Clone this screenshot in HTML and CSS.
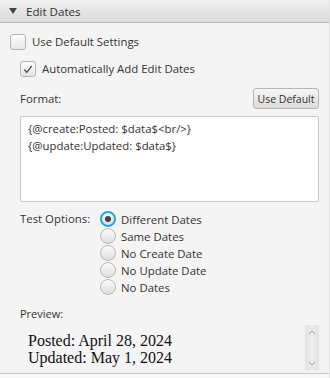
FILE: index.html
```html
<!DOCTYPE html>
<html lang="en">
<head>
  <meta charset="UTF-8" />
  <title>Edit Dates</title>
  <link rel="stylesheet" href="styles.css">
</head>
<body>
  <div class="pane">
    <div class="header">
      <span class="arrow"></span>
      <span>Edit Dates</span>
    </div>

    <div class="content">
      <label class="check">
        <span class="box"></span>
        <span>Use Default Settings</span>
      </label>

      <label class="check indent">
        <span class="box">
          <svg width="15" height="15" viewBox="0 0 15 15"><path d="M3.5 7.5 L6.2 10.6 L11.5 3.6" fill="none" stroke="#555" stroke-width="1.6"/></svg>
        </span>
        <span>Automatically Add Edit Dates</span>
      </label>

      <div class="format-row">
        <span>Format:</span>
        <button class="btn">Use Default</button>
      </div>

      <div class="editor">
        <div>{@create:Posted: $data$&lt;br/&gt;}</div>
        <div>{@update:Updated: $data$}</div>
      </div>

      <div class="options">
        <span class="opt-label">Test Options:</span>
        <div class="radios">
          <label class="radio"><span class="dot on"></span>Different Dates</label>
          <label class="radio"><span class="dot"></span>Same Dates</label>
          <label class="radio"><span class="dot"></span>No Create Date</label>
          <label class="radio"><span class="dot"></span>No Update Date</label>
          <label class="radio"><span class="dot"></span>No Dates</label>
        </div>
      </div>

      <div class="preview-label">Preview:</div>
      <div class="preview">
        <div class="preview-text">
          <div>Posted: April 28, 2024</div>
          <div>Updated: May 1, 2024</div>
        </div>
        <div class="scrollbar">
          <svg width="14" height="8" viewBox="0 0 14 8"><path d="M4 6 L7 3 L10 6" fill="none" stroke="#9a9a9a" stroke-width="1"/></svg>
          <svg width="14" height="8" viewBox="0 0 14 8"><path d="M4 2 L7 5 L10 2" fill="none" stroke="#9a9a9a" stroke-width="1"/></svg>
        </div>
      </div>
    </div>
    <div class="foot"></div>
  </div>
</body>
</html>
```

FILE: styles.css
```css
* { box-sizing: border-box; margin: 0; padding: 0; }
html, body { width: 330px; height: 378px; overflow: hidden; }
body { font-family: "Open Sans", sans-serif; font-size: 11.4px; color: #333; background: #f4f4f4; }

.pane { width: 330px; height: 378px; display: flex; flex-direction: column; border-right: 1px solid #e2e2e2; }

.header {
  height: 23px; flex: none;
  display: flex; align-items: center; gap: 9px;
  padding-left: 9px;
  background: linear-gradient(#f0f0f0, #dadada);
  border-bottom: 1px solid #b8b8b8;
  font-size: 11.6px; color: #333;
}
.arrow { width: 0; height: 0; border-left: 4px solid transparent; border-right: 4px solid transparent; border-top: 6px solid #444; }

.content { flex: 1; padding: 11px 10px 0 10px; }

.check { display: flex; align-items: center; gap: 6px; height: 16px; line-height: 16px; }
.check.indent { margin-left: 10px; margin-top: 11px; }
.box {
  width: 16px; height: 16px; flex: none;
  border: 1px solid #b5b5b5; border-radius: 3px;
  background: linear-gradient(#fdfdfd, #e6e6e6);
  display: flex; align-items: center; justify-content: center;
}

.format-row { display: flex; justify-content: space-between; align-items: center; margin: 11px 0 0 10px; height: 21px; }
.btn {
  font-family: inherit; font-size: 10.5px; color: #333;
  height: 21px; width: 66px; padding: 0;
  border: 1px solid #b5b5b5; border-radius: 3px;
  background: linear-gradient(#f6f6f6, #dcdcdc);
}

.editor {
  margin: 7px 0 0 10px; height: 86px;
  background: #fff; border: 1px solid #c8c8c8; border-radius: 2px;
  padding: 3px 7px; line-height: 17px; color: #333;
}

.options { display: flex; margin: 9px 0 0 10px; }
.opt-label { width: 80px; line-height: 16px; }
.radios { display: flex; flex-direction: column; gap: 1px; }
.radio { display: flex; align-items: center; gap: 5px; height: 16px; }
.dot {
  width: 16px; height: 16px; border-radius: 50%; flex: none;
  border: 1px solid #b8b8b8;
  background: linear-gradient(#fafafa, #dedede);
  display: flex; align-items: center; justify-content: center;
}
.dot.on { border: 2px solid #2aa7d8; }
.dot.on::after { content: ""; width: 6px; height: 6px; border-radius: 50%; background: #444; }

.preview-label { margin: 12px 0 0 10px; font-size: 11px; line-height: 14px; }
.preview { display: flex; margin: 4px 0 0 10px; height: 46px; }
.preview-text { flex: 1; padding: 7px 8px 0; font-family: "Liberation Serif", serif; font-size: 16px; line-height: 17px; color: #111; }
.scrollbar {
  width: 14px; flex: none;
  background: linear-gradient(90deg, #e2e2e2, #eeeeee, #e2e2e2);
  display: flex; flex-direction: column; justify-content: space-between;
  padding: 3px 0;
}
.foot { height: 5px; flex: none; border-top: 1px solid #c8c8c8; background: #f8f8f8; }
```
